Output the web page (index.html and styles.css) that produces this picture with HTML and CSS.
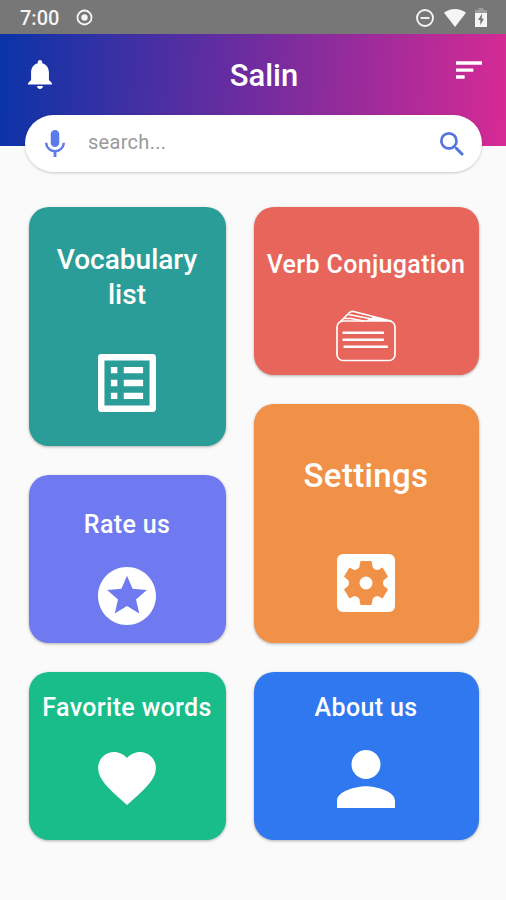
FILE: index.html
```html
<!DOCTYPE html>
<html lang="en">
<head>
<meta charset="utf-8">
<meta name="viewport" content="width=device-width, initial-scale=1">
<title>Salin</title>
<link rel="stylesheet" href="styles.css">
</head>
<body>
<div class="status">
  <span class="clock">7:00</span>
  <svg class="record" viewBox="0 0 16 16"><circle cx="8" cy="8" r="6.6" fill="none" stroke="currentColor" stroke-width="1.7"/><circle cx="8" cy="8" r="3" fill="currentColor"/></svg>
  <div class="signals">
    <svg class="dnd" viewBox="0 0 18 18"><circle cx="9" cy="9" r="8" fill="none" stroke="currentColor" stroke-width="1.9"/><path d="M4.5 9h9" stroke="currentColor" stroke-width="1.9"/></svg>
    <svg class="wifi" viewBox="0 0 22 18"><path fill="currentColor" d="M0 3.8C3 1.4 6.8 0 11 0s8 1.4 11 3.8L11 18z"/></svg>
    <svg class="battery" viewBox="0 0 12 19"><path fill="#9c9c9c" d="M3.5 0h5v2H12v4H0V2h3.5z"/><path fill="currentColor" d="M0 5h12v14H0z"/><path fill="#777" d="M7.2 5.5 3 12h2.300v5L9 10.700H6.800z"/></svg>
  </div>
</div>
<header class="header">
  <svg class="bell" viewBox="4 2.5 16 19.5"><path fill="currentColor" d="M12 22c1.1 0 2-.9 2-2h-4c0 1.1.9 2 2 2zm6-6v-5c0-3.07-1.63-5.64-4.5-6.32V4c0-.83-.67-1.5-1.5-1.5s-1.5.67-1.5 1.5v.68C7.64 5.36 6 7.92 6 11v5l-2 2v1h16v-1z"/></svg>
  <h1 class="title">Salin</h1>
  <svg class="sort" viewBox="3 6 18 12"><path fill="currentColor" d="M3 18h6v-2.300H3zM3 6v2.300h18V6zm0 7.200h12v-2.300H3z"/></svg>
</header>
<div class="search">
  <svg class="mic" viewBox="5 2 14 19"><path fill="currentColor" d="M12 14c1.66 0 3-1.34 3-3V5c0-1.66-1.34-3-3-3S9 3.34 9 5v6c0 1.66 1.34 3 3 3z"/><path fill="currentColor" d="M17.3 11c0 3-2.54 5.1-5.3 5.1S6.7 14 6.7 11H5c0 3.41 2.72 6.23 6 6.72V21h2v-3.28c3.28-.48 6-3.3 6-6.72z"/></svg>
  <span class="hint">search...</span>
  <svg class="lens" viewBox="3 3 17.5 17.5"><path fill="currentColor" d="M15.5 14h-.79l-.28-.27A6.471 6.471 0 0 0 16 9.5 6.5 6.5 0 1 0 9.5 16c1.61 0 3.09-.59 4.23-1.57l.27.28v.79l5 4.99L20.49 19zm-6 0C7.01 14 5 11.99 5 9.5S7.01 5 9.5 5 14 7.01 14 9.5 11.99 14 9.5 14z"/></svg>
</div>
<main class="board">
  <div class="column left">
    <section class="card tall teal">
      <h2 class="label vocab">Vocabulary<br>list</h2>
      <svg class="icon" viewBox="3 3 18 18"><path fill="currentColor" d="M19 5v14H5V5zm1.1-2H3.9c-.5 0-.9.4-.9.9v16.2c0 .4.4.9.9.9h16.2c.4 0 .9-.5.9-.9V3.9c0-.5-.5-.9-.9-.9zM11 7h6v2h-6zm0 4h6v2h-6zm0 4h6v2h-6zM7 7h2v2H7zm0 4h2v2H7zm0 4h2v2H7z"/></svg>
    </section>
    <section class="card violet">
      <h2 class="label rate">Rate us</h2>
      <svg class="icon" viewBox="2 2 20 20"><path fill="currentColor" d="M11.99 2C6.47 2 2 6.48 2 12s4.47 10 9.99 10C17.52 22 22 17.52 22 12S17.52 2 11.99 2zm4.24 16L12 15.45 7.77 18l1.12-4.81-3.73-3.23 4.92-.42L12 5l1.92 4.53 4.92.42-3.73 3.23z"/></svg>
    </section>
    <section class="card green">
      <h2 class="label fav">Favorite words</h2>
      <svg class="icon heart" viewBox="2 3 20 18.35"><path fill="currentColor" d="m12 21.35-1.45-1.32C5.4 15.36 2 12.28 2 8.5 2 5.42 4.42 3 7.5 3c1.74 0 3.41.81 4.5 2.09C13.09 3.81 14.76 3 16.5 3 19.58 3 22 5.42 22 8.5c0 3.78-3.4 6.86-8.55 11.54z"/></svg>
    </section>
  </div>
  <div class="column right">
    <section class="card red">
      <h2 class="label verb">Verb Conjugation</h2>
      <svg class="wallet" viewBox="0 0 60 52" fill="none" stroke="currentColor" stroke-width="1.7" stroke-linecap="round" stroke-linejoin="round"><rect x="1" y="11" width="58" height="39.5" rx="6"/><path d="M4.500 11.500 13 3q2-2.200 4.500-1.500L55 11M8 8.500h7L28 11M12.500 4.500 36 9"/><path fill="currentColor" stroke="none" d="M29 10.800 38 6.500l17 4.500z"/><path stroke-width="2.400" d="M7.500 22.800H47M7.500 29.800H47M8.500 36.800H51"/></svg>
    </section>
    <section class="card tall orange">
      <h2 class="label sett">Settings</h2>
      <svg class="icon" viewBox="0 0 58 58"><rect width="58" height="58" rx="6" fill="currentColor"/><path fill="#f09147" d="M23.500 7h11l1.300 6.500q2 2.500 5 2.500l4.700-2.500 5.500 9-4.500 4q-1 2.500 0 5l4.500 4-5.500 9-4.700-2.500q-3 0-5 2.500L34.500 51h-11l-1.300-6.500q-2-2.500-5-2.500l-4.700 2.500-5.500-9 4.500-4q1-2.500 0-5l-4.500-4 5.500-9 4.700 2.500q3 0 5-2.500z"/><circle cx="29" cy="29" r="6.500" fill="currentColor"/></svg>
    </section>
    <section class="card blue">
      <h2 class="label about">About us</h2>
      <svg class="icon" viewBox="4 4 16 16"><path fill="currentColor" d="M12 12c2.21 0 4-1.79 4-4s-1.79-4-4-4-4 1.79-4 4 1.79 4 4 4zm0 2c-2.67 0-8 1.34-8 4v2h16v-2c0-2.66-5.33-4-8-4z"/></svg>
    </section>
  </div>
</main>
</body>
</html>
```
FILE: styles.css
```css
* { box-sizing: border-box; }
body {
  margin: 0;
  height: 900px;
  overflow: hidden;
  background: #fafafa;
  font-family: Roboto, "Liberation Sans", sans-serif;
  color: #fff;
}
svg { display: block; flex: none; }
h1, h2 { margin: 0; font-weight: 500; white-space: nowrap; }

.status {
  height: 34px;
  padding: 1px 19px 0 20px;
  display: flex;
  align-items: center;
  background: #777;
  color: #f5f5f5;
}
.clock { width: 56px; font-size: 20px; font-weight: 500; }
.record { width: 17px; height: 17px; }
.signals { margin-left: auto; display: flex; align-items: center; }
.dnd { width: 18px; height: 18px; margin-right: 10px; }
.wifi { width: 22px; height: 18px; margin-right: 9px; }
.battery { width: 12px; height: 19px; }

.header {
  height: 112px;
  padding: 21px 24px 0 28px;
  display: grid;
  grid-template-columns: 26px 1fr 26px;
  align-items: start;
  background: linear-gradient(93deg, #0a34a8 0%, #702c9f 50%, #d62a94 100%);
}
.bell { width: 24px; height: 29px; margin-top: 5px; }
.title { padding-left: 18px; font-size: 31px; line-height: 41px; text-align: center; }
.sort { width: 26px; height: 18px; margin-top: 6px; }

.search {
  position: relative;
  width: 457px;
  height: 57px;
  margin: -31px 0 0 25px;
  padding: 0 18px 0 20px;
  display: flex;
  align-items: center;
  border-radius: 29px;
  background: #fff;
  box-shadow: 0 1px 3px rgba(0, 0, 0, .2);
  color: #5374dc;
}
.mic { width: 20px; height: 27px; color: #5b7bea; }
.hint { margin: -3px auto 0 23px; font-size: 20px; letter-spacing: .3px; color: #999; }
.lens { width: 24px; height: 24px; }

.board { display: flex; gap: 28px; padding: 35px 0 0 28.5px; }
.column { display: flex; flex-direction: column; gap: 29px; }
.left { width: 197px; }
.right { width: 225px; }
.card {
  height: 168px;
  display: flex;
  flex-direction: column;
  align-items: center;
  border-radius: 20px;
  box-shadow: 0 1px 3px rgba(0, 0, 0, .3);
}
.tall { height: 238.5px; }
.teal { background: #2a9d98; }
.violet { background: #6f7af1; }
.green { background: #19bd89; }
.red { background: #e7655b; }
.orange { background: #f09147; }
.blue { background: #3078ef; }

.icon { width: 58px; height: 58px; }
.heart { height: 53px; }
.wallet { width: 60px; height: 52px; margin-top: 30px; }
.label { font-size: 25px; line-height: 30px; letter-spacing: .35px; text-align: center; }
.vocab { margin: 35px 0 42px; font-size: 28px; line-height: 35px; letter-spacing: 0; }
.rate { margin: 35px 0 27px; }
.fav { margin: 21px 0 29px; }
.verb { margin-top: 43px; }
.sett { margin: 52px 0 58px; font-size: 33px; line-height: 40px; }
.about { margin: 21px 0 27px; }
```
